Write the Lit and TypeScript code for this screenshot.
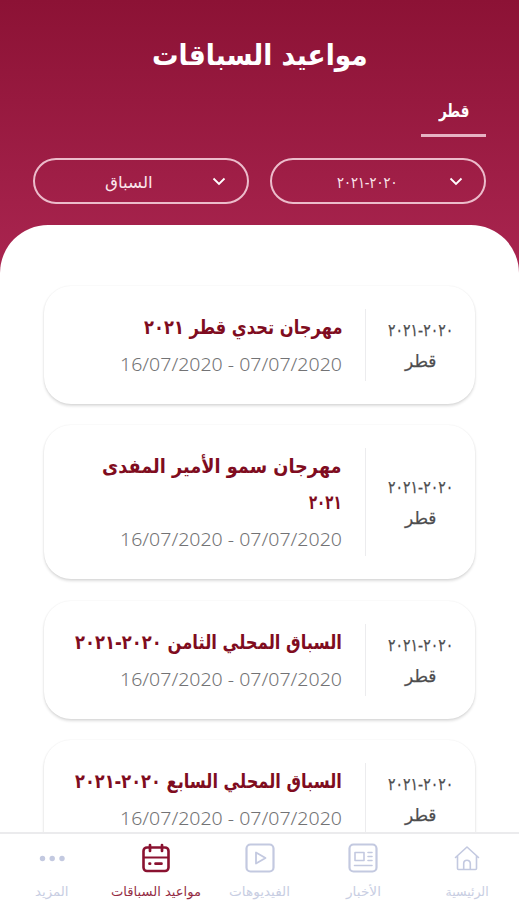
import { LitElement, html, css, svg } from "lit";
import { customElement, property, state } from "lit/decorators.js";
import { styleMap } from "lit/directives/style-map.js";
import { classMap } from "lit/directives/class-map.js";

/** A single line of text, condensed or widened to a fixed measure. */
@customElement("fit-text")
class FitText extends LitElement {
  @property() text = "";
  @property({ type: Number }) measure = 0;
  @state() ratio = 1;

  static styles = css`
    :host {
      display: block;
      flex: none;
      text-align: right;
    }
    .line {
      display: inline-block;
      white-space: nowrap;
      transform-origin: right center;
    }
    .box {
      direction: rtl;
    }
  `;

  firstUpdated() {
    const line = this.renderRoot.querySelector(".line") as HTMLElement;
    const natural = line.offsetWidth;
    if (natural > 0) this.ratio = this.measure / natural;
  }

  render() {
    return html`<div class="box" style=${styleMap({ width: `${this.measure}px` })}>
      <span class="line" style=${styleMap({ transform: `scaleX(${this.ratio})` })}>${this.text}</span>
    </div>`;
  }
}

interface Race {
  lines: { text: string; measure: number }[];
}

const SEASON = "٢٠٢٠-٢٠٢١";

const RACES: Race[] = [
  { lines: [{ text: "مهرجان تحدي قطر ٢٠٢١", measure: 198 }] },
  {
    lines: [
      { text: "مهرجان سمو الأمير المفدى", measure: 240 },
      { text: "٢٠٢١", measure: 33 },
    ],
  },
  { lines: [{ text: "السباق المحلي الثامن ٢٠٢٠-٢٠٢١", measure: 267 }] },
  { lines: [{ text: "السباق المحلي السابع ٢٠٢٠-٢٠٢١", measure: 267 }] },
];

@customElement("race-card")
class RaceCard extends LitElement {
  @property({ attribute: false }) race!: Race;

  static styles = css`
    :host {
      display: flex;
      flex: none;
      box-sizing: border-box;
      padding: 23px 22px 23px 0;
      border-radius: 27px;
      background: #fff;
      box-shadow: 0 2px 3px rgba(0, 0, 0, 0.14), 0 0 2px rgba(0, 0, 0, 0.07);
    }
    .side {
      width: 88px;
      display: flex;
      flex-direction: column;
      align-items: center;
      justify-content: center;
      border-left: 1px solid #ececee;
      color: #4c4c4e;
      line-height: 31px;
      box-sizing: border-box;
      padding-left: 23px;
      padding-top: 2px;
      -webkit-text-stroke: 0.25px currentColor;
    }
    .season {
      font-size: 17px;
    }
    .country {
      font-size: 17px;
    }
    .info {
      flex: 1;
      padding-top: 1px;
      margin-bottom: -1px;
      padding-right: 23px;
      line-height: 36px;
    }
    .title {
      color: #7f0c20;
      font-size: 19.5px;
      font-weight: 700;
    }
    .date {
      color: #737375;
      font-family: "Noto Sans", "Open Sans", sans-serif;
      font-size: 19px;
      font-weight: 300;
    }
  `;

  render() {
    return html`
      <div class="side">
        <fit-text class="season" text=${SEASON} measure="65"></fit-text>
        <fit-text class="country" text="قطر" measure="31"></fit-text>
      </div>
      <div class="info">
        ${this.race.lines.map(
          (l) => html`<fit-text class="title" text=${l.text} measure=${l.measure}></fit-text>`
        )}
        <fit-text class="date" text="07/07/2020 - 16/07/2020" measure="222"></fit-text>
      </div>
    `;
  }
}

const ICONS = {
  home: svg`<path d="M4.500 15.500 16 5l11.500 10.500M6.500 14v12.500q0 1 1 1h17q1 0 1-1V14M12.700 27V21.500a3.300 3.300 0 0 1 6.600 0V27"/>`,
  news: svg`<rect x="2.500" y="2.500" width="27" height="27" rx="4" stroke-width="2.200"/><path d="M8 10.500h9v8H8zM21 10.500h4M21 14.500h4M21 18.500h4M7.500 23.500h17.500"/>`,
  video: svg`<rect x="2.500" y="2.500" width="27" height="27" rx="4" stroke-width="2.200"/><path d="M12 10.500v11l9.500-5.500z" stroke-width="1.800"/>`,
  calendar: svg`<rect x="3.500" y="5.500" width="25" height="23.500" rx="3.500" stroke-width="2.600"/><path d="M4 15.500h24" stroke-width="2.200"/><path d="M10 3v6M22 3v6M9.500 21.700h.6M15.500 21.700h6" stroke-width="2.700"/>`,
  more: svg`<g fill="currentColor" stroke="none"><circle cx="6.500" cy="16.500" r="2.700"/><circle cx="16.200" cy="16.500" r="2.700"/><circle cx="26" cy="16.500" r="2.700"/></g>`,
};

const TABS = [
  { icon: ICONS.home, label: "الرئيسية", measure: 43, active: false },
  { icon: ICONS.news, label: "الأخبار", measure: 35, active: false },
  { icon: ICONS.video, label: "الفيديوهات", measure: 61, active: false },
  { icon: ICONS.calendar, label: "مواعيد السباقات", measure: 90, active: true },
  { icon: ICONS.more, label: "المزيد", measure: 33, active: false },
];

@customElement("app-root")
class AppRoot extends LitElement {
  static styles = css`
    :host {
      display: flex;
      flex-direction: column;
      width: 519px;
      height: 900px;
      overflow: hidden;
      direction: rtl;
      background: #fff;
      font-family: "DejaVu Sans", sans-serif;
    }
    .page {
      flex: 1;
      min-height: 0;
      display: flex;
      flex-direction: column;
      overflow: hidden;
      background: linear-gradient(#8c1235, #aa2550 275px);
    }
    .head {
      flex: none;
      height: 225px;
      box-sizing: border-box;
      padding: 35px 33px 0;
      color: #fff;
    }
    .title {
      display: flex;
      justify-content: center;
      height: 40px;
      line-height: 40px;
      font-size: 29px;
      font-weight: 700;
    }
    .tab {
      width: 65px;
      height: 62px;
      margin-bottom: 21px;
      box-sizing: border-box;
      padding-top: 21px;
      padding-right: 1px;
      display: flex;
      justify-content: center;
      border-bottom: 3px solid #e6b3c3;
      line-height: 30px;
      font-size: 18px;
      font-weight: 700;
    }
    .tab fit-text {
      margin-right: -2px;
    }
    .selects {
      display: flex;
      gap: 21px;
    }
    .select {
      flex: 1;
      height: 46px;
      box-sizing: border-box;
      border: 2px solid #ecbccb;
      border-radius: 23px;
      display: flex;
      align-items: center;
      padding: 0 21px;
      font-size: 16px;
    }
    .chevron {
      width: 14px;
      height: 10px;
      fill: none;
      stroke: currentColor;
      stroke-width: 1.8;
    }
    .value {
      flex: 1;
      display: flex;
      justify-content: center;
      padding-right: 10px;
      padding-top: 3px;
      color: #fbe6ec;
    }
    .value.first {
      padding-right: 8px;
    }
    .sheet {
      flex: 1;
      min-height: 0;
      box-sizing: border-box;
      padding: 61px 44px 0;
      display: flex;
      flex-direction: column;
      gap: 21.4px;
      overflow: hidden;
      border-radius: 48px 48px 0 0;
      background: #fff;
    }
    .nav {
      flex: none;
      height: 68px;
      box-sizing: border-box;
      border-top: 2px solid #ebebed;
      display: grid;
      grid-template-columns: repeat(5, 1fr);
      background: #fff;
    }
    .item {
      display: flex;
      flex-direction: column;
      align-items: center;
      padding-top: 8px;
      color: #c3c9e0;
      font-size: 12.5px;
      line-height: 18px;
    }
    .item.active {
      color: #8a1230;
    }
    .icon {
      width: 32px;
      height: 32px;
      margin-bottom: 9px;
      fill: none;
      stroke: currentColor;
      stroke-width: 1.6;
      stroke-linecap: round;
      stroke-linejoin: round;
    }
    .label {
      opacity: 0.9;
    }
  `;

  private select(text: string, measure: number, first: boolean) {
    return html`<div class="select">
      <svg class="chevron" viewBox="0 0 14 10"><path d="M1.500 2.500 7 8 12.500 2.500" /></svg>
      <div class=${classMap({ value: true, first })}>
        <fit-text text=${text} measure=${measure}></fit-text>
      </div>
    </div>`;
  }

  render() {
    return html`
      <main class="page">
        <header class="head">
          <div class="title"><fit-text text="مواعيد السباقات" measure="216"></fit-text></div>
          <div class="tab"><fit-text text="قطر" measure="31"></fit-text></div>
          <div class="selects">
            ${this.select(SEASON, 61, true)} ${this.select("السباق", 48, false)}
          </div>
        </header>
        <section class="sheet">
          ${RACES.map((race) => html`<race-card .race=${race}></race-card>`)}
        </section>
      </main>
      <nav class="nav">
        ${TABS.map(
          (t) => html`<div class=${classMap({ item: true, active: t.active })}>
            <svg class="icon" viewBox="0 0 32 32">${t.icon}</svg>
            <fit-text class="label" text=${t.label} measure=${t.measure}></fit-text>
          </div>`
        )}
      </nav>
    `;
  }
}
